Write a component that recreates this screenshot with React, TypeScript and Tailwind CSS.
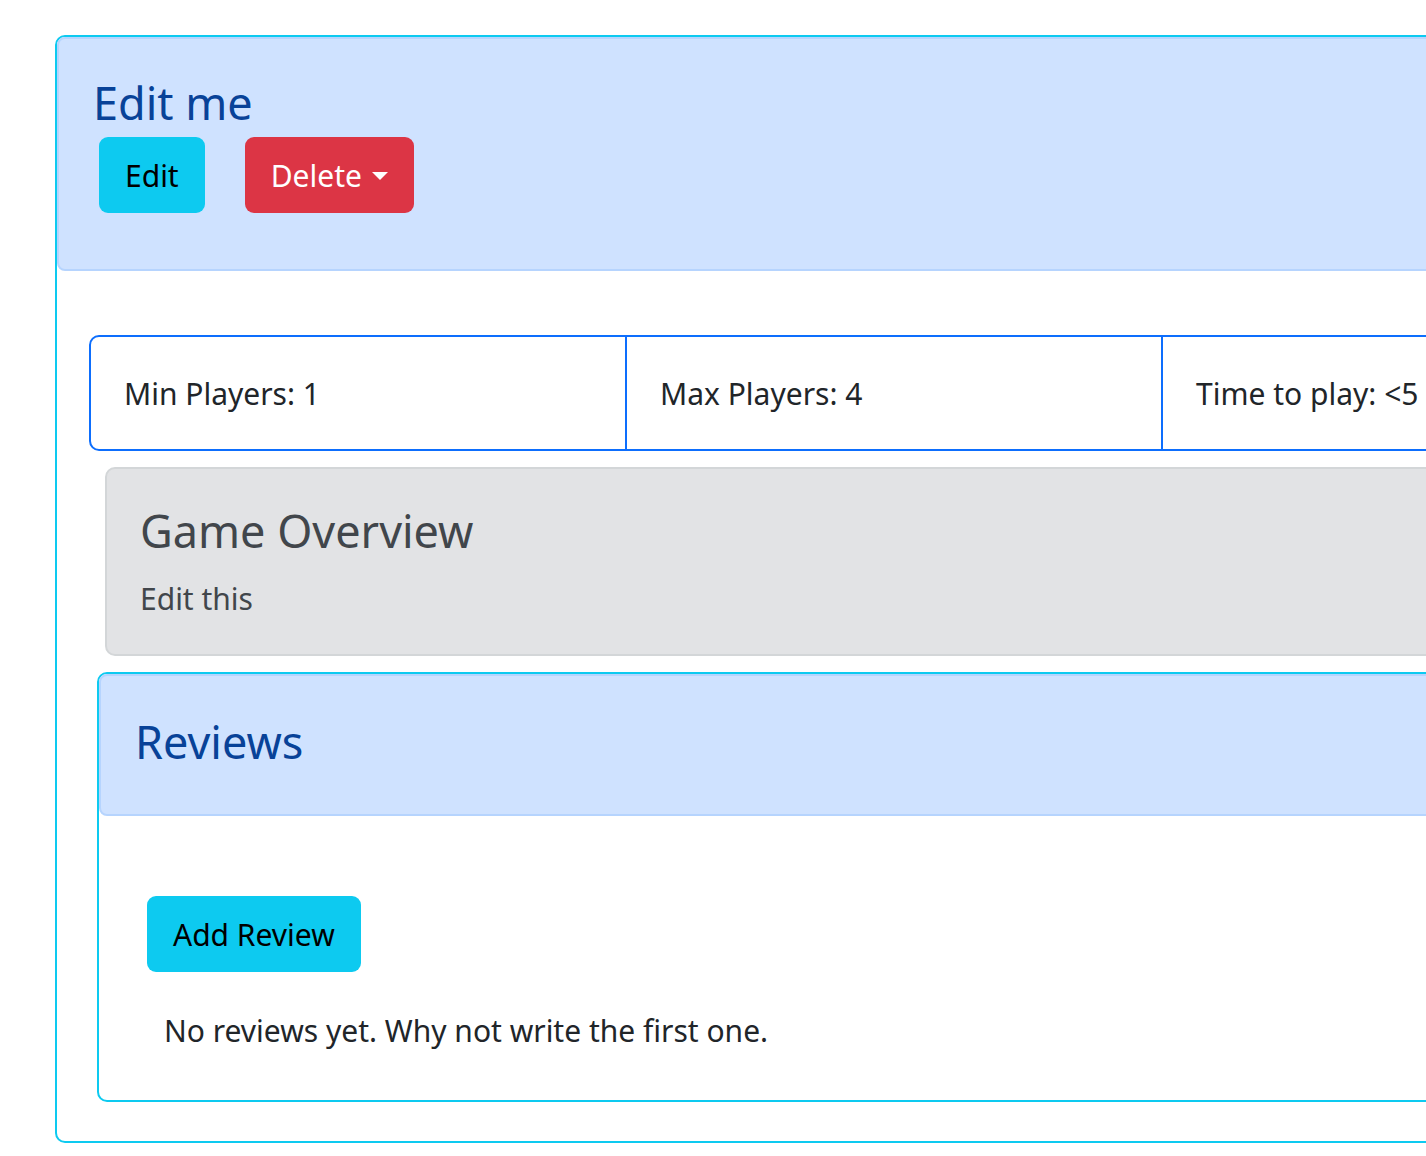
import React from "react";

const font = { fontFamily: '"Noto Sans", "Open Sans", sans-serif' };

function Cell({ children, last }: { children: React.ReactNode; last?: boolean }) {
  return (
    <div className={`w-[536px] shrink-0 flex items-center pl-[33px] ${last ? "" : "border-r-2 border-[#0d6efd]"}`}>
      <span className="text-[30px] text-[#212529]">{children}</span>
    </div>
  );
}

export default function App() {
  return (
    <div className="min-h-screen overflow-hidden bg-white pt-[35px] pl-[55px]" style={font}>
      <div className="w-[1500px] rounded-[10px] border-2 border-[#0dcaf0] pb-[39px]">
        <div className="h-[234px] rounded-[8px] border-2 border-[#b6d4fe] bg-[#cfe2ff] pl-[34px] pt-[35px]">
          <h1 className="text-[45px] leading-[58px] text-[#084298]">Edit me</h1>
          <div className="mt-[5px] flex gap-[40px] pl-[6px]">
            <button className="h-[76px] rounded-[9px] bg-[#0dcaf0] px-[26px] text-[30px] text-black">Edit</button>
            <button className="flex h-[76px] items-center gap-[10px] rounded-[9px] bg-[#dc3545] px-[26px] text-[30px] text-white">
              Delete
              <span className="mt-[2px] h-0 w-0 border-x-[8px] border-t-[8px] border-x-transparent border-t-white" />
            </button>
          </div>
        </div>

        <div className="ml-[32px] mt-[64px] flex h-[116px] rounded-[10px] border-2 border-[#0d6efd]">
          <Cell>Min Players: 1</Cell>
          <Cell>Max Players: 4</Cell>
          <Cell last>Time to play: &lt;5 mins</Cell>
        </div>

        <div className="ml-[48px] mt-[16px] h-[189px] rounded-[10px] border-2 border-[#d3d6d8] bg-[#e2e3e5] pl-[33px] pt-[33px] text-[#41464b]">
          <h2 className="text-[45px] leading-[58px]">Game Overview</h2>
          <p className="mt-[16px] text-[30px]">Edit this</p>
        </div>

        <div className="ml-[40px] mt-[16px] h-[430px] rounded-[10px] border-2 border-[#0dcaf0]">
          <div className="h-[142px] rounded-[8px] border-2 border-[#b6d4fe] bg-[#cfe2ff] pl-[34px] pt-[37px]">
            <h2 className="text-[45px] leading-[58px] text-[#084298]">Reviews</h2>
          </div>
          <div className="pl-[48px] pt-[80px]">
            <button className="h-[76px] rounded-[9px] bg-[#0dcaf0] px-[26px] text-[30px] text-black">Add Review</button>
            <p className="mt-[36px] pl-[17px] text-[30px] text-[#212529]">No reviews yet. Why not write the first one.</p>
          </div>
        </div>
      </div>
    </div>
  );
}
